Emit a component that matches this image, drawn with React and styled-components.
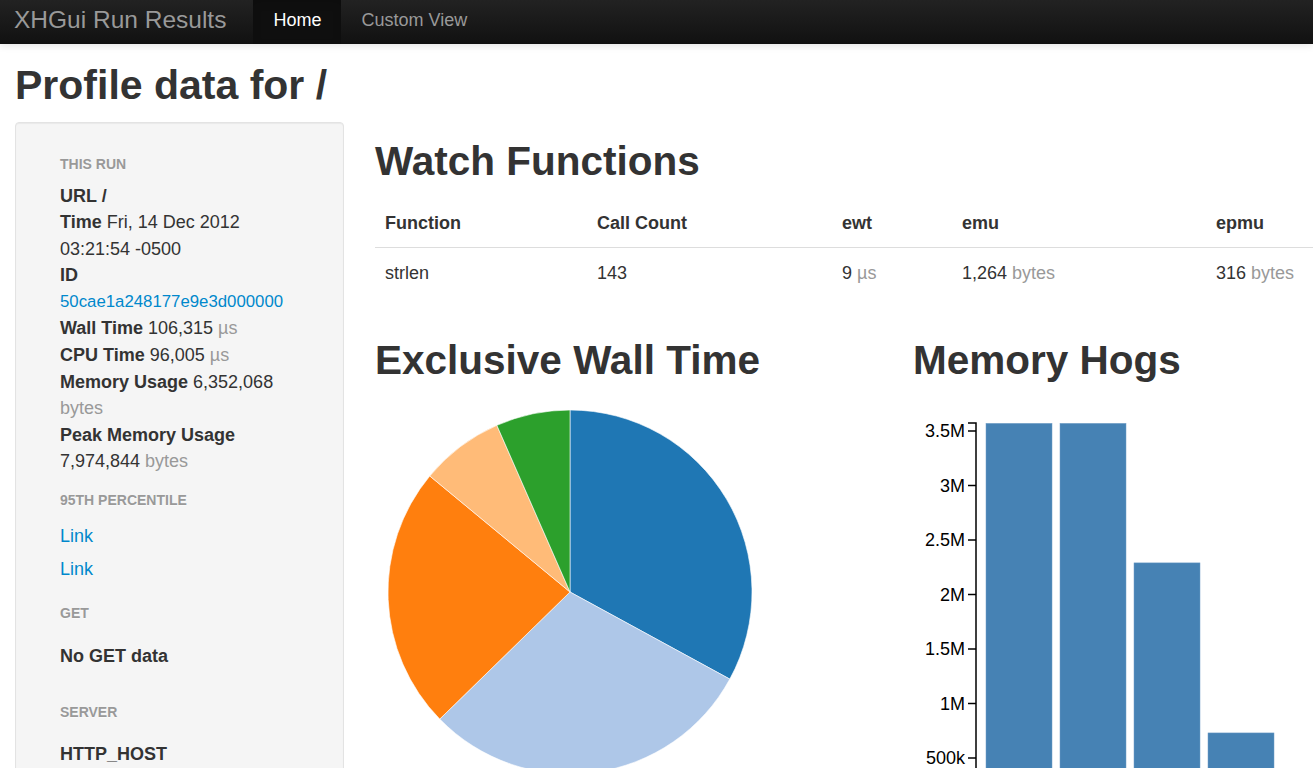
import React from 'react';
import styled, { createGlobalStyle } from 'styled-components';

const Global = createGlobalStyle`
  html, body { margin: 0; padding: 0; overflow: hidden; background: #fff; }
  body {
    font-family: "Liberation Sans", Arial, Helvetica, sans-serif;
    font-size: 18px;
    line-height: 26.6px;
    color: #333;
  }
  a { color: #0088cc; text-decoration: none; }
`;

const Navbar = styled.nav`
  height: 44px;
  display: flex;
  align-items: stretch;
  background: linear-gradient(to bottom, #222222, #111111);
  box-shadow: 0 1px 8px rgba(0, 0, 0, 0.12);
`;

const Brand = styled.a`
  display: flex;
  align-items: center;
  padding: 0 27px 4px 14px;
  font-size: 24.5px;
  && { color: #999; }
`;

const NavItem = styled.a`
  display: flex;
  align-items: center;
  padding: 0 20px 4px;
  font-size: 18px;
  && { color: ${(p) => (p.$active ? '#fff' : '#999')}; }
  background: ${(p) => (p.$active ? '#0f0f0f' : 'transparent')};
  box-shadow: ${(p) => (p.$active ? 'inset 0 3px 8px rgba(0,0,0,0.125)' : 'none')};
`;

const PageTitle = styled.h1`
  margin: 19px 0 15px 15px;
  font-size: 41px;
  line-height: 44px;
  font-weight: bold;
  color: #333;
`;

const Row = styled.div`
  display: flex;
  align-items: flex-start;
  padding-left: 15px;
  gap: 31px;
`;

const Sidebar = styled.aside`
  box-sizing: border-box;
  width: 329px;
  flex: none;
  background: #f5f5f5;
  border: 1px solid #e3e3e3;
  border-radius: 4px;
  box-shadow: inset 0 1px 1px rgba(0, 0, 0, 0.05);
  padding: 28px 0 60px 44px;
`;

const SideHeader = styled.div`
  margin-top: ${(p) => p.$mt || 0}px;
  padding: 3px 0;
  line-height: 20px;
  font-size: 14px;
  font-weight: bold;
  text-transform: uppercase;
  color: #999;
  text-shadow: 0 1px 0 rgba(255, 255, 255, 0.5);
`;

const Facts = styled.dl`
  margin: ${(p) => p.$mt || 0}px 0 0 0;
  width: 248px;
`;

const Fact = styled.dd`
  margin: 0;
`;

const Label = styled.strong`
  font-weight: bold;
`;

const Muted = styled.span`
  color: #999;
`;

const IdLink = styled.a`
  display: block;
  font-size: 16.8px;
`;

const SideLink = styled.a`
  display: block;
  margin-top: ${(p) => p.$mt || 0}px;
  padding: 3px 0;
`;

const SideStrong = styled.div`
  margin-top: ${(p) => p.$mt || 0}px;
  font-weight: bold;
`;

const Main = styled.main`
  flex: 1;
  min-width: 0;
  padding-top: 17px;
`;

const SectionTitle = styled.h2`
  margin: 0;
  font-size: 40.5px;
  line-height: 44px;
  font-weight: bold;
  color: #333;
`;

const Table = styled.table`
  margin-top: 15px;
  width: 100%;
  table-layout: fixed;
  border-collapse: collapse;
`;

const Th = styled.th`
  box-sizing: border-box;
  text-align: left;
  font-weight: bold;
  padding: 12px 10px 10px;
  border-bottom: 1px solid #ddd;
  width: ${(p) => p.$w}px;
`;

const Td = styled.td`
  padding: 12px 10px 10px;
  white-space: nowrap;
`;

const Charts = styled.div`
  margin-top: 42px;
  display: grid;
  grid-template-columns: 538px 1fr;
`;

const ChartBox = styled.section`
  display: flex;
  flex-direction: column;
`;

const ChartSvg = styled.svg`
  display: block;
  margin-top: 18px;
  overflow: visible;
`;

const slices = [
  { from: 0, to: 118.6, color: '#1f77b4' },
  { from: 118.6, to: 225.7, color: '#aec7e8' },
  { from: 225.7, to: 309.6, color: '#ff7f0e' },
  { from: 309.6, to: 336.3, color: '#ffbb78' },
  { from: 336.3, to: 360, color: '#2ca02c' },
];

function Pie() {
  const cx = 195;
  const cy = 192;
  const r = 182;
  const pt = (a) => {
    const rad = (a * Math.PI) / 180;
    return [cx + r * Math.sin(rad), cy - r * Math.cos(rad)];
  };
  return (
    <ChartSvg width="400" height="400" viewBox="0 0 400 400">
      {slices.map((s, i) => {
        const [x1, y1] = pt(s.from);
        const [x2, y2] = pt(s.to);
        const large = s.to - s.from > 180 ? 1 : 0;
        return (
          <path
            key={i}
            d={`M${cx},${cy}L${x1},${y1}A${r},${r} 0 ${large} 1 ${x2},${y2}Z`}
            fill={s.color}
            stroke="#fff"
            strokeWidth="0.6"
          />
        );
      })}
    </ChartSvg>
  );
}

const ticks = ['3.5M', '3M', '2.5M', '2M', '1.5M', '1M', '500k'];
const bars = [3570000, 3570000, 2290000, 730000];

function Bars() {
  const axisX = 63;
  const zero = 412.5;
  const perUnit = 109 / 1000000;
  return (
    <ChartSvg width="400" height="420" viewBox="0 0 400 420">
      {bars.map((v, i) => (
        <rect
          key={i}
          x={73 + i * 74}
          y={zero - v * perUnit}
          width="66"
          height={v * perUnit}
          fill="#4682b4"
          stroke="#6f9cc6"
          strokeWidth="0.5"
        />
      ))}
      <path d={`M${axisX - 8},23H${axisX}V420`} fill="none" stroke="#000" strokeWidth="1.5" />
      {ticks.map((t, i) => {
        const y = 31 + i * 54.5;
        return (
          <g key={t}>
            <line x1={axisX - 8} x2={axisX} y1={y} y2={y} stroke="#000" strokeWidth="1.5" />
            <text
              x={axisX - 11}
              y={y}
              dy="0.35em"
              textAnchor="end"
              fontSize="18"
              fontFamily='"Liberation Sans", Arial, sans-serif'
              fill="#000"
            >
              {t}
            </text>
          </g>
        );
      })}
    </ChartSvg>
  );
}

export default function App() {
  return (
    <>
      <Global />
      <Navbar>
        <Brand href="#">XHGui Run Results</Brand>
        <NavItem href="#" $active>Home</NavItem>
        <NavItem href="#">Custom View</NavItem>
      </Navbar>
      <PageTitle>Profile data for /</PageTitle>
      <Row>
        <Sidebar>
          <SideHeader>This Run</SideHeader>
          <Facts $mt={5.5}>
            <Fact><Label>URL /</Label></Fact>
            <Fact><Label>Time</Label> Fri, 14 Dec 2012 03:21:54 -0500</Fact>
            <Fact>
              <Label>ID</Label>
              <IdLink href="#">50cae1a248177e9e3d000000</IdLink>
            </Fact>
            <Fact><Label>Wall Time</Label> 106,315 <Muted>µs</Muted></Fact>
            <Fact><Label>CPU Time</Label> 96,005 <Muted>µs</Muted></Fact>
            <Fact><Label>Memory Usage</Label> 6,352,068 <Muted>bytes</Muted></Fact>
            <Fact><Label>Peak Memory Usage</Label> 7,974,844 <Muted>bytes</Muted></Fact>
          </Facts>
          <SideHeader $mt={11.7}>95th Percentile</SideHeader>
          <SideLink href="#" $mt={7.5}>Link</SideLink>
          <SideLink href="#">Link</SideLink>
          <SideHeader $mt={14.5}>GET</SideHeader>
          <SideStrong $mt={17.5}>No GET data</SideStrong>
          <SideHeader $mt={28.7}>Server</SideHeader>
          <SideStrong $mt={16}>HTTP_HOST</SideStrong>
          <Fact>localhost</Fact>
        </Sidebar>
        <Main>
          <SectionTitle>Watch Functions</SectionTitle>
          <Table>
            <thead>
              <tr>
                <Th $w={212}>Function</Th>
                <Th $w={245}>Call Count</Th>
                <Th $w={120}>ewt</Th>
                <Th $w={254}>emu</Th>
                <Th $w={107}>epmu</Th>
              </tr>
            </thead>
            <tbody>
              <tr>
                <Td>strlen</Td>
                <Td>143</Td>
                <Td>9 <Muted>µs</Muted></Td>
                <Td>1,264 <Muted>bytes</Muted></Td>
                <Td>316 <Muted>bytes</Muted></Td>
              </tr>
            </tbody>
          </Table>
          <Charts>
            <ChartBox>
              <SectionTitle>Exclusive Wall Time</SectionTitle>
              <Pie />
            </ChartBox>
            <ChartBox>
              <SectionTitle>Memory Hogs</SectionTitle>
              <Bars />
            </ChartBox>
          </Charts>
        </Main>
      </Row>
    </>
  );
}
